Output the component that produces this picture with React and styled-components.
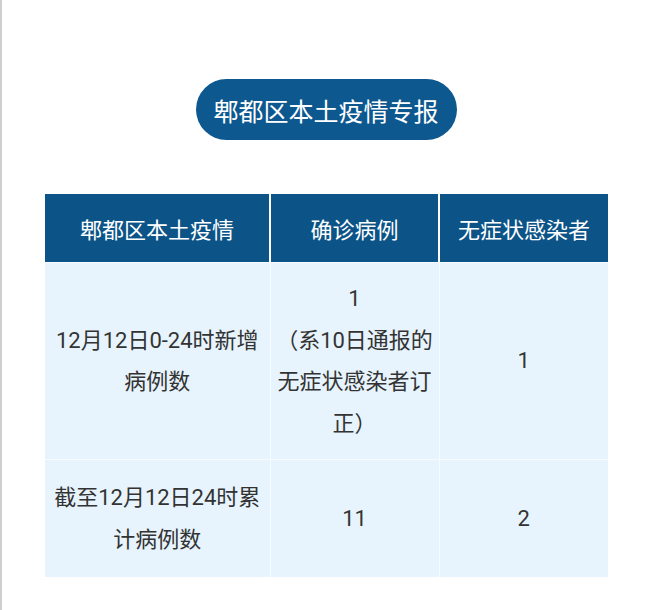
import styled, { createGlobalStyle } from "styled-components";

const GlobalStyle = createGlobalStyle`
  html, body {
    margin: 0;
    padding: 0;
    background: #fff;
  }
  body {
    font-family: Roboto, "Noto Sans CJK SC", "Noto Sans", sans-serif;
  }
`;

const Page = styled.div`
  box-sizing: border-box;
  width: 650px;
  height: 610px;
  border-left: 2px solid #cfcfcf;
  display: flex;
  flex-direction: column;
  align-items: center;
  padding-top: 79px;
`;

const Pill = styled.div`
  width: 261px;
  height: 61px;
  border-radius: 31px;
  background: #0e5890;
  color: #fff;
  display: flex;
  align-items: center;
  justify-content: center;
  font-size: 25px;
`;

const Table = styled.table`
  margin-top: 54px;
  width: 563px;
  border-collapse: collapse;
  table-layout: fixed;
  margin-left: 1px;
`;

const Th = styled.th`
  height: 68px;
  padding: 0;
  background: #0c5387;
  color: #fff;
  font-weight: 400;
  font-size: 22px;
  border-left: 2px solid #fff;
  &:first-child {
    border-left: none;
  }
`;

const Td = styled.td`
  padding: ${(p) => (p.$tall ? "15px 2px" : "17px 2px")};
  background: #e7f4fd;
  color: #333;
  font-size: 22px;
  line-height: 41.5px;
  text-align: center;
  vertical-align: middle;
  border-left: 1px solid #f6fbff;
  border-top: 1px solid #f6fbff;
  &:first-child {
    border-left: none;
  }
`;

const rows = [
  {
    label: "12月12日0-24时新增病例数",
    confirmed: (
      <>
        1
        <br />
        （系10日通报的
        <br />
        无症状感染者订
        <br />
        正）
      </>
    ),
    asym: "1",
    tall: true,
  },
  {
    label: "截至12月12日24时累计病例数",
    confirmed: "11",
    asym: "2",
  },
];

export default function App() {
  return (
    <>
      <GlobalStyle />
      <Page>
        <Pill>郫都区本土疫情专报</Pill>
        <Table>
          <colgroup>
            <col style={{ width: 225 }} />
            <col style={{ width: 169 }} />
            <col style={{ width: 169 }} />
          </colgroup>
          <thead>
            <tr>
              <Th>郫都区本土疫情</Th>
              <Th>确诊病例</Th>
              <Th>无症状感染者</Th>
            </tr>
          </thead>
          <tbody>
            {rows.map((r) => (
              <tr key={r.label}>
                <Td $tall={r.tall}>{r.label}</Td>
                <Td $tall={r.tall}>{r.confirmed}</Td>
                <Td $tall={r.tall}>{r.asym}</Td>
              </tr>
            ))}
          </tbody>
        </Table>
      </Page>
    </>
  );
}
